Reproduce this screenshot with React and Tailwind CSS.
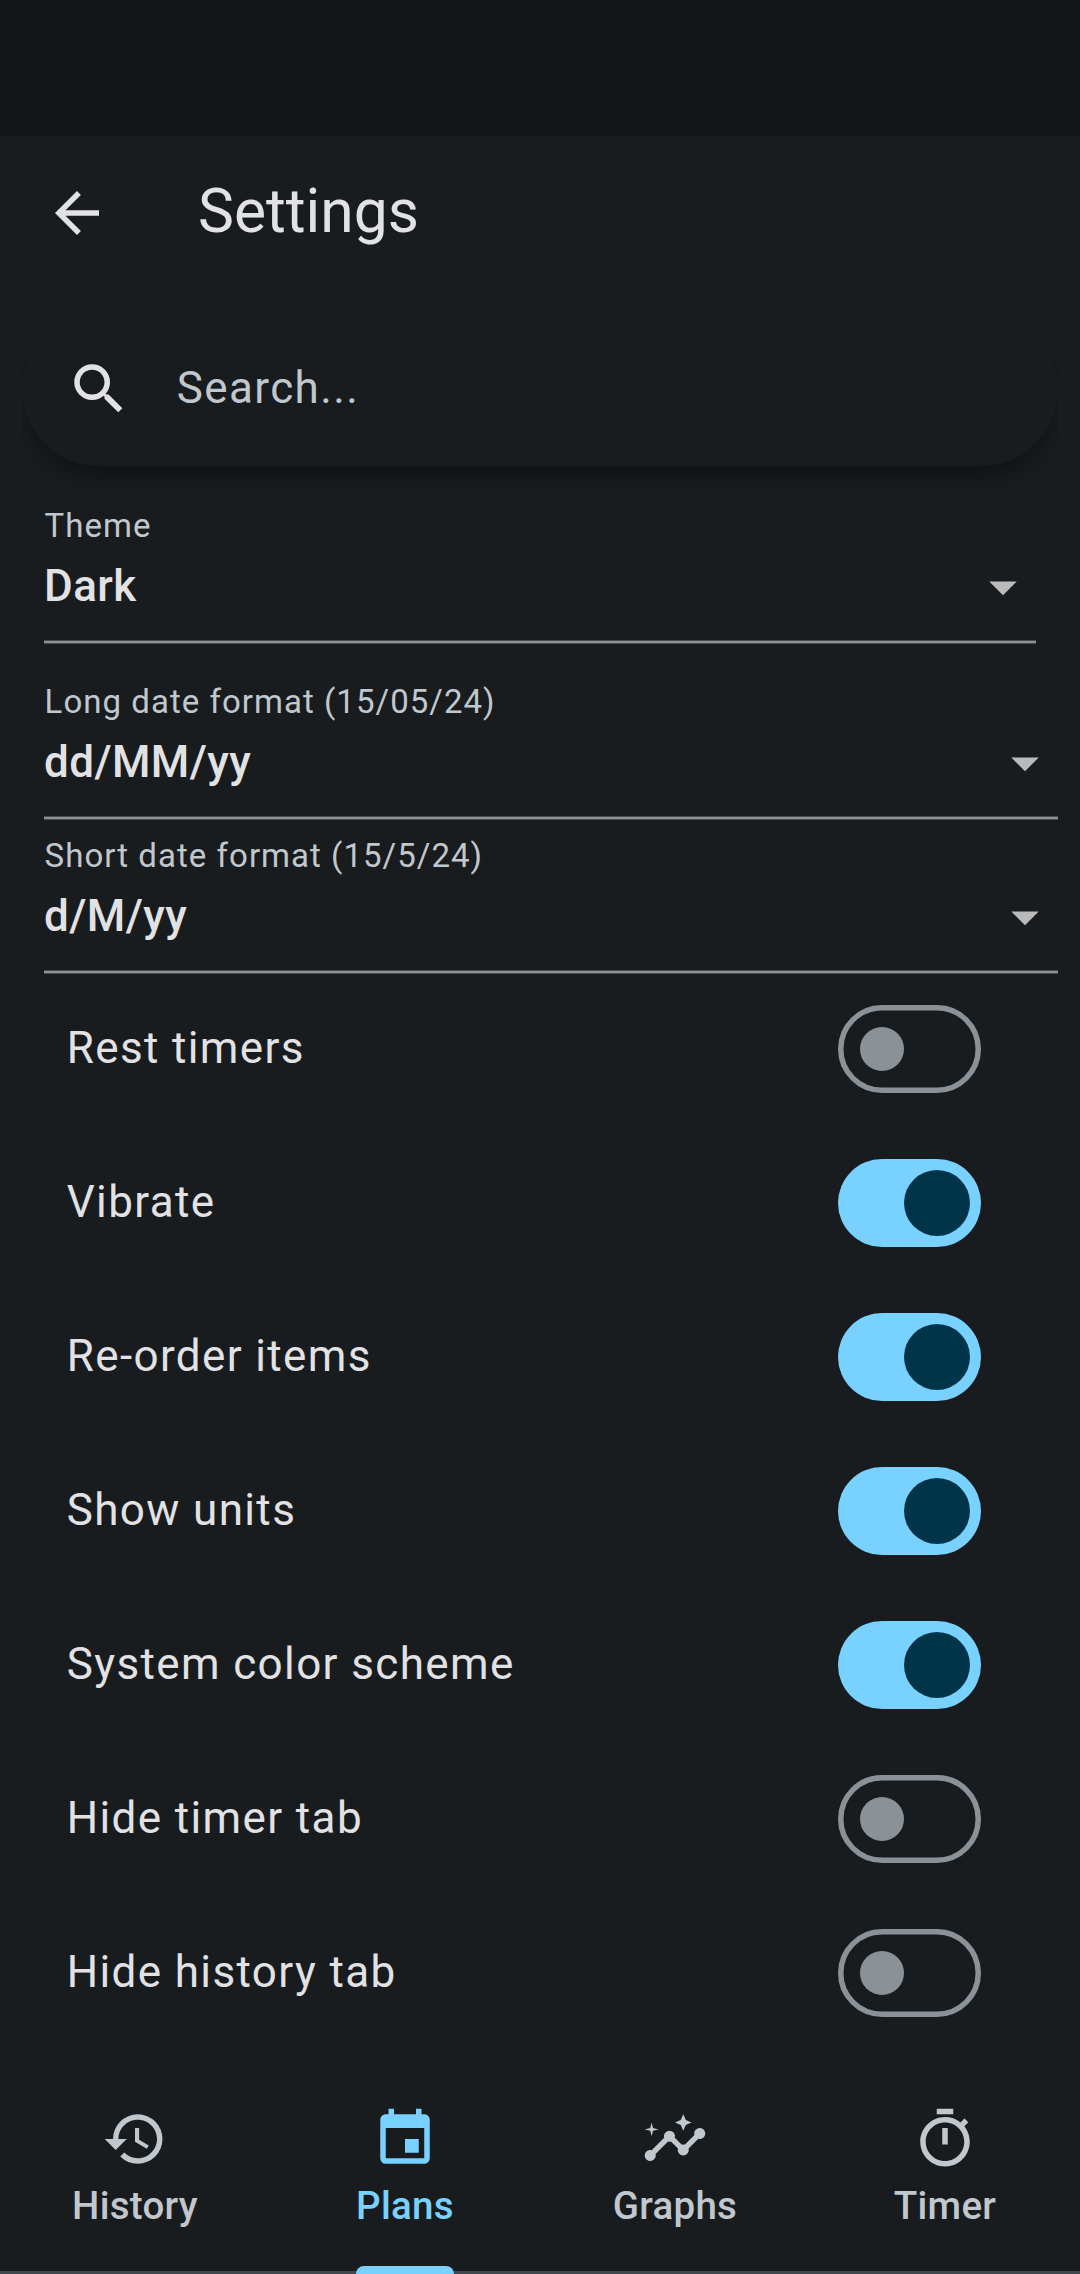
import React from "react";
import {
  MdArrowBack,
  MdEvent,
  MdHistory,
  MdInsights,
  MdOutlineTimer,
  MdSearch,
} from "react-icons/md";

const fields = [
  { label: "Theme", value: "Dark", box: "mr-[44px] mb-[22px]" },
  { label: "Long date format (15/05/24)", value: "dd/MM/yy", box: "mr-[22px]" },
  { label: "Short date format (15/5/24)", value: "d/M/yy", box: "mr-[22px] -mb-[2px]" },
];

const toggles = [
  { label: "Rest timers", on: false },
  { label: "Vibrate", on: true },
  { label: "Re-order items", on: true },
  { label: "Show units", on: true },
  { label: "System color scheme", on: true },
  { label: "Hide timer tab", on: false },
  { label: "Hide history tab", on: false },
];

const tabs = [
  { label: "History", Icon: MdHistory },
  { label: "Plans", Icon: MdEvent, active: true },
  { label: "Graphs", Icon: MdInsights },
  { label: "Timer", Icon: MdOutlineTimer },
];

function SelectField({ label, value, box }) {
  return (
    <div className={`ml-[44px] flex h-[154px] shrink-0 flex-col ${box}`}>
      <div className="flex flex-1 flex-col pt-[16px]">
        <div className="h-[39px] pl-[0.6px] text-[33px] leading-[39px] tracking-[1.03px] text-[#c0c7cd]">
          {label}
        </div>
        <div className="mt-[8px] flex h-[66px] items-center justify-between">
          <span className="text-[44px] leading-[66px] font-medium tracking-[0.41px]">
            {value}
          </span>
          <svg viewBox="0 0 24 24" className="mt-[2px] h-[66px] w-[66px] text-[#bababb]">
            <path d="M7 10l5 5 5-5z" fill="currentColor" />
          </svg>
        </div>
      </div>
      <div className="h-[4px] border-y border-[#474c50] bg-[#8b9297]" />
    </div>
  );
}

function Switch({ on }) {
  return on ? (
    <div className="flex h-[88px] w-[143px] items-center justify-end rounded-full bg-[#78d1ff] pr-[11px]">
      <div className="h-[66px] w-[66px] rounded-full bg-[#003549]" />
    </div>
  ) : (
    <svg viewBox="0 0 52 32" className="h-[88px] w-[143px]">
      <rect x="1" y="1" width="50" height="30" rx="15" fill="none" stroke="#8b9297" strokeWidth="2" />
      <circle cx="16" cy="16" r="8" fill="#8b9297" />
    </svg>
  );
}

export default function App() {
  return (
    <div className="flex h-[2274px] w-[1080px] flex-col overflow-hidden bg-[#191c1e] font-['Roboto',sans-serif] text-[#e2e2e5]">
      <div className="h-[136px] shrink-0 bg-[#141516]" />

      <header className="flex h-[154px] shrink-0 items-center pl-[44px]">
        <MdArrowBack className="h-[66px] w-[66px]" />
        <h1 className="mb-[2px] ml-[88px] text-[60.5px] leading-[76px]">Settings</h1>
      </header>

      <div className="shrink-0 px-[22px] pt-[22px] [clip-path:inset(0_22px_-60px_22px)]">
        <div className="flex h-[154px] items-center rounded-full bg-[#191c1e] pl-[44px] shadow-[0_14px_20px_-3px_rgba(0,0,0,0.32)]">
          <MdSearch className="h-[66px] w-[66px]" />
          <span className="mb-[2px] ml-[44.8px] text-[44px] leading-[66px] tracking-[1.375px] text-[#c0c7cd]">
            Search...
          </span>
        </div>
      </div>

      <main className="flex flex-1 flex-col pt-[24px]">
        {fields.map((f) => (
          <SelectField key={f.label} {...f} />
        ))}
        {toggles.map((t) => (
          <div
            key={t.label}
            className="flex h-[154px] shrink-0 items-center justify-between pr-[99px] pl-[66.7px]"
          >
            <span className="mb-[2px] text-[44px] leading-[66px] tracking-[1.375px]">{t.label}</span>
            <Switch on={t.on} />
          </div>
        ))}
      </main>

      <nav className="grid h-[198px] shrink-0 grid-cols-4 shadow-[inset_0_-3px_0_#41484d]">
        {tabs.map(({ label, Icon, active }) => (
          <div
            key={label}
            className={`flex flex-col items-center pt-[30px] ${active ? "text-[#78d1ff]" : "text-[#c0c7cd]"}`}
          >
            <Icon className="h-[66px] w-[66px] shrink-0" />
            <span className="mt-[6px] text-[38.5px] leading-[55px] font-medium tracking-[0.275px]">
              {label}
            </span>
            {active && <div className="mt-auto h-[8px] w-[98px] rounded-t-[8px] bg-[#78d1ff]" />}
          </div>
        ))}
      </nav>
    </div>
  );
}
